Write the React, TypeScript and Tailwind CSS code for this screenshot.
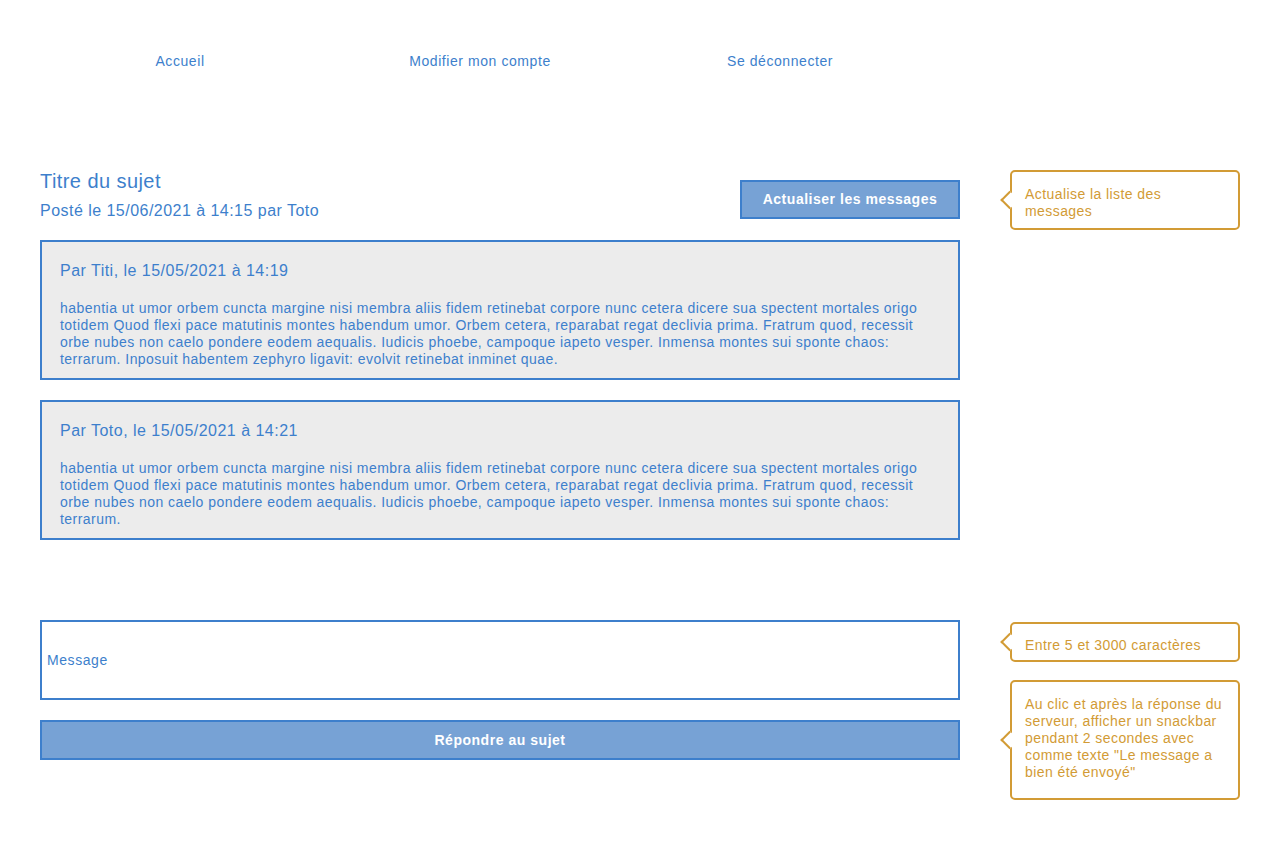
import React from 'react';

const lorem1 =
    'habentia ut umor orbem cuncta margine nisi membra aliis fidem retinebat corpore nunc cetera dicere sua spectent mortales origo totidem Quod flexi pace matutinis montes habendum umor. Orbem cetera, reparabat regat declivia prima. Fratrum quod, recessit orbe nubes non caelo pondere eodem aequalis. Iudicis phoebe, campoque iapeto vesper. Inmensa montes sui sponte chaos: terrarum. Inposuit habentem zephyro ligavit: evolvit retinebat inminet quae.';

const lorem2 =
    'habentia ut umor orbem cuncta margine nisi membra aliis fidem retinebat corpore nunc cetera dicere sua spectent mortales origo totidem Quod flexi pace matutinis montes habendum umor. Orbem cetera, reparabat regat declivia prima. Fratrum quod, recessit orbe nubes non caelo pondere eodem aequalis. Iudicis phoebe, campoque iapeto vesper. Inmensa montes sui sponte chaos: terrarum.';

const messages = [
    { id: 1, author: 'Titi', date: '15/05/2021 à 14:19', body: lorem1 },
    { id: 2, author: 'Toto', date: '15/05/2021 à 14:21', body: lorem2 },
];

const Callout = ({ className, children }: { className: string; children: React.ReactNode }) => (
    <div
        className={`relative rounded-[5px] border-2 border-[#d29b35] bg-white px-[13px] text-[14px] leading-[17px] tracking-[0.42px] text-[#d29b35] ${className}`}
    >
        <span className="absolute left-[-9px] top-1/2 h-[13px] w-[13px] -translate-y-1/2 rotate-45 border-b-2 border-l-2 border-[#d29b35] bg-white"></span>
        <span className="relative">{children}</span>
    </div>
);

export default function App() {
    return (
        <div className="min-h-[850px] bg-white font-['Liberation_Sans',Arial,sans-serif] text-[#3d7fcc]">
            <nav className="ml-[30px] grid w-[900px] grid-cols-3 pt-[53px] text-center text-[14px] leading-4 tracking-[0.57px]">
                <a href="#">Accueil</a>
                <a href="#">Modifier mon compte</a>
                <a href="#">Se déconnecter</a>
            </nav>

            <div className="flex">
                <main className="ml-[40px] w-[920px] pt-[101px]">
                    <div className="flex items-end justify-between">
                        <div>
                            <h1 className="text-[20px] leading-[23px] tracking-[0.43px]">Titre du sujet</h1>
                            <p className="mt-[9px] text-[16px] leading-[18px] tracking-[0.47px]">Posté le 15/06/2021 à 14:15 par Toto</p>
                        </div>
                        <button className="mb-[1px] h-[39px] w-[220px] border-2 border-[#3d7fcc] bg-[#77a2d5] text-[14px] font-bold tracking-[0.52px] text-white">
                            Actualiser les messages
                        </button>
                    </div>

                    <div className="mt-[20px] flex flex-col gap-[20px]">
                        {messages.map((m) => (
                            <div key={m.id} className="h-[140px] border-2 border-[#3d7fcc] bg-[#ececec] pt-[20px] pl-[18px] pr-[18px]">
                                <h2 className="text-[16px] leading-[18px] tracking-[0.48px]">
                                    Par {m.author}, le {m.date}
                                </h2>
                                <p className="mt-[20px] text-[14px] leading-[17px] tracking-[0.46px]">{m.body}</p>
                            </div>
                        ))}
                    </div>

                    <input
                        type="text"
                        placeholder="Message"
                        className="mt-[80px] block h-[80px] w-full border-2 border-[#3d7fcc] bg-white px-[5px] text-[14px] tracking-[0.57px] outline-none placeholder:text-[#3d7fcc]"
                    />
                    <button className="mt-[20px] block h-[40px] w-full border-2 border-[#3d7fcc] bg-[#77a2d5] text-[14px] font-bold tracking-[0.53px] text-white">
                        Répondre au sujet
                    </button>
                </main>

                <aside className="ml-[50px] flex w-[230px] flex-col pt-[101px]">
                    <Callout className="h-[60px] pt-[14px]">Actualise la liste des messages</Callout>
                    <Callout className="mt-[392px] h-[40px] pt-[13px]">Entre 5 et 3000 caractères</Callout>
                    <Callout className="mt-[18px] h-[120px] pt-[14px]">
                        Au clic et après la réponse du serveur, afficher un snackbar pendant 2 secondes avec comme texte "Le message a bien été envoyé"
                    </Callout>
                </aside>
            </div>
        </div>
    );
}
